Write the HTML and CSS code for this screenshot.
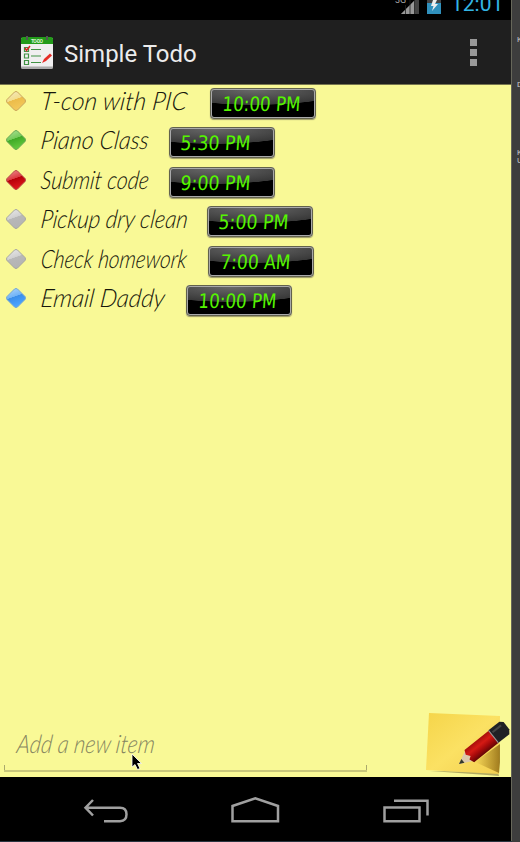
FILE: index.html
```html
<!DOCTYPE html>
<html lang="en">
<head>
<meta charset="utf-8">
<title>Simple Todo</title>
<link rel="stylesheet" href="styles.css">
</head>
<body>
<svg width="0" height="0" class="defs" aria-hidden="true">
  <defs>
    <linearGradient id="yellow" x1="0" y1="0" x2=".35" y2="1"><stop offset="0" stop-color="#f3ebc4"/><stop offset=".5" stop-color="#f3dd8c"/><stop offset=".52" stop-color="#ecbc4a"/><stop offset="1" stop-color="#f3c85a"/></linearGradient>
    <linearGradient id="green" x1="0" y1="0" x2=".35" y2="1"><stop offset="0" stop-color="#b0e39a"/><stop offset=".5" stop-color="#74ca59"/><stop offset=".52" stop-color="#40aa26"/><stop offset="1" stop-color="#62c83d"/></linearGradient>
    <linearGradient id="red" x1="0" y1="0" x2=".35" y2="1"><stop offset="0" stop-color="#ee9494"/><stop offset=".5" stop-color="#dc3840"/><stop offset=".52" stop-color="#b70009"/><stop offset="1" stop-color="#dd171b"/></linearGradient>
    <linearGradient id="gray" x1="0" y1="0" x2=".35" y2="1"><stop offset="0" stop-color="#eaeaea"/><stop offset=".5" stop-color="#d0d0d0"/><stop offset=".52" stop-color="#b8b8b8"/><stop offset="1" stop-color="#b4b4b4"/></linearGradient>
    <linearGradient id="blue" x1="0" y1="0" x2=".35" y2="1"><stop offset="0" stop-color="#b2d7fb"/><stop offset=".5" stop-color="#70b3f7"/><stop offset=".52" stop-color="#3b8eea"/><stop offset="1" stop-color="#4ba5ff"/></linearGradient>
    <linearGradient id="note" x1="0" y1="0" x2="1" y2="1"><stop offset="0" stop-color="#f5d54a"/><stop offset=".5" stop-color="#fbe163"/><stop offset="1" stop-color="#f3cf50"/></linearGradient>
    <linearGradient id="pencil" x1="0" y1="0" x2="0" y2="1"><stop offset="0" stop-color="#a80e0c"/><stop offset=".35" stop-color="#d51a14"/><stop offset=".65" stop-color="#a90b0b"/><stop offset="1" stop-color="#640606"/></linearGradient>
    <linearGradient id="shade" x1="0" y1="0" x2="1" y2="0"><stop offset="0" stop-color="#9b7415" stop-opacity="0"/><stop offset="1" stop-color="#8a6510" stop-opacity=".8"/></linearGradient>
  </defs>
</svg>
<div class="desktop">
  <main class="phone">
    <header class="status">
      <svg class="signal" width="27" height="20" viewBox="395 0 27 20">
        <text x="395" y="3" font-size="9" fill="#aaa">3G</text>
        <path d="M401 14L419 -4V14Z" fill="#444"/>
        <path d="M401 14L414.500 .5V14Z" fill="#999"/>
        <path d="M405.500 5V14M410 0V14M414.500 0V14" stroke="#222" stroke-width=".8"/>
      </svg>
      <svg class="battery" width="14" height="20" viewBox="0 0 14 20">
        <path d="M0 0H14V4H0Z" fill="#444"/><path d="M0 3H14V14H0Z" fill="#3090bc"/>
        <path d="M6 0H10L8 4H11L5 11L6.500 6H4Z" fill="#eee"/>
      </svg>
      <span class="clock">12:01</span>
    </header>
    <div class="actionbar">
      <svg class="logo" width="34" height="35" viewBox="0 0 34 35">
        <rect x="1" y="3" width="32" height="31" rx="1.500" fill="#aaa"/>
        <rect x="1" y="3" width="32" height="28.500" rx="1" fill="#f0eff0"/>
        <path d="M1 9V4Q1 2 3 2H31Q33 2 33 4V9Z" fill="#239b1a"/>
        <path d="M1 31.500H33" stroke="#ccc"/>
        <path d="M7 1V5M27 1V5" stroke="#555" stroke-width="2"/>
        <text x="11" y="7.500" font-size="5" font-weight="700" fill="#d9f3d3" textLength="12">TO-DO</text>
        <g fill="none" stroke="#419344" stroke-width="1.200"><path d="M4.500 12.500H8.500V16.500H4.500ZM4.500 19H8.500V23H4.500ZM4.500 25.500H8.500V29.500H4.500ZM11 14.500H21M11 21H21M11 27.500H21"/></g>
        <path d="M5 13L6.500 15.500L10 11" fill="none" stroke="#d22" stroke-width="1.500"/>
        <path d="M22 28L24 24L30 18.500L32 20.500L26 26Z" fill="#e52b26"/>
      </svg>
      <h1>Simple Todo</h1>
      <div class="more"><i></i><i></i><i></i></div>
    </div>
    <ul class="list">
      <li><svg class="gem" viewBox="0 0 20 20"><path d="M8.500 1Q10 0 11.500 1L19 8.500Q20 10 19 11.500L11.500 19Q10 20 8.500 19L1 11.500Q0 10 1 8.500Z" fill="url(#yellow)" stroke="#c9a55c"/></svg><svg class="task w1" height="39"><text textLength="146" lengthAdjust="spacingAndGlyphs">T-con with PIC</text></svg><span class="lcd"><svg><text x="10" textLength="78" lengthAdjust="spacingAndGlyphs">10:00 PM</text></svg></span></li>
      <li><svg class="gem" viewBox="0 0 20 20"><path d="M8.500 1Q10 0 11.500 1L19 8.500Q20 10 19 11.500L11.500 19Q10 20 8.500 19L1 11.500Q0 10 1 8.500Z" fill="url(#green)" stroke="#6aa853"/></svg><svg class="task w2" height="39"><text textLength="108" lengthAdjust="spacingAndGlyphs">Piano Class</text></svg><span class="lcd"><svg><text x="9" textLength="70" lengthAdjust="spacingAndGlyphs">5:30 PM</text></svg></span></li>
      <li><svg class="gem" viewBox="0 0 20 20"><path d="M8.500 1Q10 0 11.500 1L19 8.500Q20 10 19 11.500L11.500 19Q10 20 8.500 19L1 11.500Q0 10 1 8.500Z" fill="url(#red)" stroke="#b64b48"/></svg><svg class="task w2" height="39"><text textLength="108" lengthAdjust="spacingAndGlyphs">Submit code</text></svg><span class="lcd"><svg><text x="9" textLength="70" lengthAdjust="spacingAndGlyphs">9:00 PM</text></svg></span></li>
      <li><svg class="gem" viewBox="0 0 20 20"><path d="M8.500 1Q10 0 11.500 1L19 8.500Q20 10 19 11.500L11.500 19Q10 20 8.500 19L1 11.500Q0 10 1 8.500Z" fill="url(#gray)" stroke="#a6a6a0"/></svg><svg class="task w3" height="39"><text textLength="147" lengthAdjust="spacingAndGlyphs">Pickup dry clean</text></svg><span class="lcd"><svg><text x="9" textLength="70" lengthAdjust="spacingAndGlyphs">5:00 PM</text></svg></span></li>
      <li><svg class="gem" viewBox="0 0 20 20"><path d="M8.500 1Q10 0 11.500 1L19 8.500Q20 10 19 11.500L11.500 19Q10 20 8.500 19L1 11.500Q0 10 1 8.500Z" fill="url(#gray)" stroke="#a6a6a0"/></svg><svg class="task w4" height="39"><text textLength="146" lengthAdjust="spacingAndGlyphs">Check homework</text></svg><span class="lcd"><svg><text x="10" textLength="70" lengthAdjust="spacingAndGlyphs">7:00 AM</text></svg></span></li>
      <li><svg class="gem" viewBox="0 0 20 20"><path d="M8.500 1Q10 0 11.500 1L19 8.500Q20 10 19 11.500L11.500 19Q10 20 8.500 19L1 11.500Q0 10 1 8.500Z" fill="url(#blue)" stroke="#76a8d2"/></svg><svg class="task w5" height="39"><text textLength="124" lengthAdjust="spacingAndGlyphs">Email Daddy</text></svg><span class="lcd"><svg><text x="10" textLength="78" lengthAdjust="spacingAndGlyphs">10:00 PM</text></svg></span></li>
    </ul>
    <div class="composer">
      <div class="field"><svg class="task hint" width="160" height="34"><text textLength="138" lengthAdjust="spacingAndGlyphs">Add a new item</text></svg></div>
      <svg class="notepad" width="90" height="68" viewBox="424 709 90 68">
        <path d="M430 771L498 772L499 776L487 775Z" fill="#8b8045" opacity=".65"/>
        <path d="M429 713L500 716L499 774L426 770Z" fill="url(#note)"/>
        <path d="M475 762L500 744V762L499 773Z" fill="url(#shade)"/>
        <g transform="translate(459 764) rotate(-38.500)">
          <path d="M0 0L15 -7.500V7.500Z" fill="#dcc9a9"/><path d="M0 0L5 -2.500V2.500Z" fill="#34392d"/>
          <path d="M13 -7.500H45V8H13L11 3L14 1L11 -3Z" fill="url(#pencil)"/>
          <path d="M44 -8H58L61 -5V4L58 8H44Z" fill="#202125"/><path d="M44 -8V8" stroke="#999"/>
          <path d="M46 -4H57" stroke="#444" stroke-width="2"/>
        </g>
      </svg>
    </div>
    <nav class="nav">
      <svg width="512" height="65" viewBox="0 777 512 65" fill="none" stroke="#a0a0a0" stroke-width="2.500">
        <path d="M93 800L85.500 807.700L93 815.500M86 807.700H120Q126.500 807.700 126.500 814.300T120 821.300H104"/>
        <path d="M232.500 821.300V806L255.300 798.200L278 806V821.300Z"/>
        <path d="M384.500 807.500H419.500V821.300H384.500ZM394 800.800H427.500V815.500"/>
        <path d="M0 841.500H512" stroke="#293541" stroke-width="1"/>
      </svg>
    </nav>
    <svg class="cursor" width="12" height="18" viewBox="0 0 12 18"><path d="M1 1V14L4 11.500L6.500 16.500L9 15.500L6.500 10.500H10.500Z" fill="#000" stroke="#fff" stroke-width=".8"/></svg>
  </main>
  <aside class="side"><span>K</span><span>D</span><span>K</span><span>U</span></aside>
</div>
</body>
</html>
```
FILE: styles.css
```css
* { box-sizing: border-box; }
body { margin: 0; background: #3d3d3d; font-family: Roboto, sans-serif; }
.defs { position: absolute; }
.desktop { display: flex; width: 520px; height: 842px; overflow: hidden; }
.phone { position: relative; width: 512px; height: 842px; background: #f9f996; border-right: 1px solid #67675a; display: flex; flex-direction: column; }
.status { height: 20px; background: #000; display: flex; justify-content: flex-end; padding-right: 9px; overflow: hidden; }
.signal { margin-right: 5px; overflow: visible; }
.battery { margin-right: 10px; }
.clock { width: 51px; color: #33b5e5; font-size: 21px; line-height: 24px; margin-top: -8px; white-space: nowrap; }
.actionbar { height: 65px; background: #1f1f1f; border-bottom: 1px solid #77764f; display: flex; align-items: center; padding: 0 34px 0 20px; }
.logo { margin-top: 1px; }
h1 { margin: 3px 0 0 10px; color: #ececec; font-size: 24px; font-weight: 400; line-height: 30px; flex: 1; }
.more { display: grid; gap: 3px; }
.more i { display: block; width: 7px; height: 7px; background: #999; }
.list { list-style: none; margin: 0; padding: 0; flex: 1; }
.list li { display: flex; height: 39.4px; }
.gem { width: 20px; height: 20px; margin: 6px 13px 0 6px; }
.task { overflow: visible; font-family: Lato, sans-serif; font-size: 23px; font-style: italic; font-weight: 300; fill: #17170c; }
.task text { transform: translate(1px, 25px) skewX(-7deg) scaleY(1.1); }
.w1 { width: 171px; }
.w2 { width: 130px; }
.w3 { width: 168px; }
.w4 { width: 169px; }
.w5 { width: 147px; }
.lcd { width: 106px; height: 31px; margin-top: 3px; border: 2px solid #a9a9aa; border-radius: 4px; outline: 1px solid #62624c; outline-offset: -1px; background: radial-gradient(ellipse 90px 15px at 42% 0, #686868, #383838 97%, #000 100%); box-shadow: 0 1px 1px #9b9868; }
.lcd svg { display: block; width: 102px; height: 27px; overflow: visible; }
.lcd text { font-family: "DejaVu Sans", sans-serif; font-size: 20px; fill: #55f500; transform: translateY(21px) skewX(-4deg); }
.composer { display: flex; justify-content: space-between; height: 68px; }
.field { width: 363px; height: 63px; margin-left: 4px; padding: 19px 0 0 11px; border-bottom: 2px solid #c9c87b; background: linear-gradient(#aaa96c, #aaa96c) left bottom / 1px 5px no-repeat, linear-gradient(#aaa96c, #aaa96c) right bottom / 1px 5px no-repeat; }
.hint { fill: #85855f; }
.notepad { margin-right: -3px; overflow: visible; position: relative; z-index: 1; }
.nav { height: 65px; background: #000; }
.nav svg { display: block; }
.cursor { position: absolute; left: 131px; top: 753px; }
.side { width: 8px; padding: 36px 0 0 5px; color: #ccc; font: 8px/8px "Liberation Sans", sans-serif; overflow: hidden; }
.side span { display: block; height: 45px; }
.side span:nth-child(2) { height: 68px; }
.side span:nth-child(3) { height: 8px; }
```
